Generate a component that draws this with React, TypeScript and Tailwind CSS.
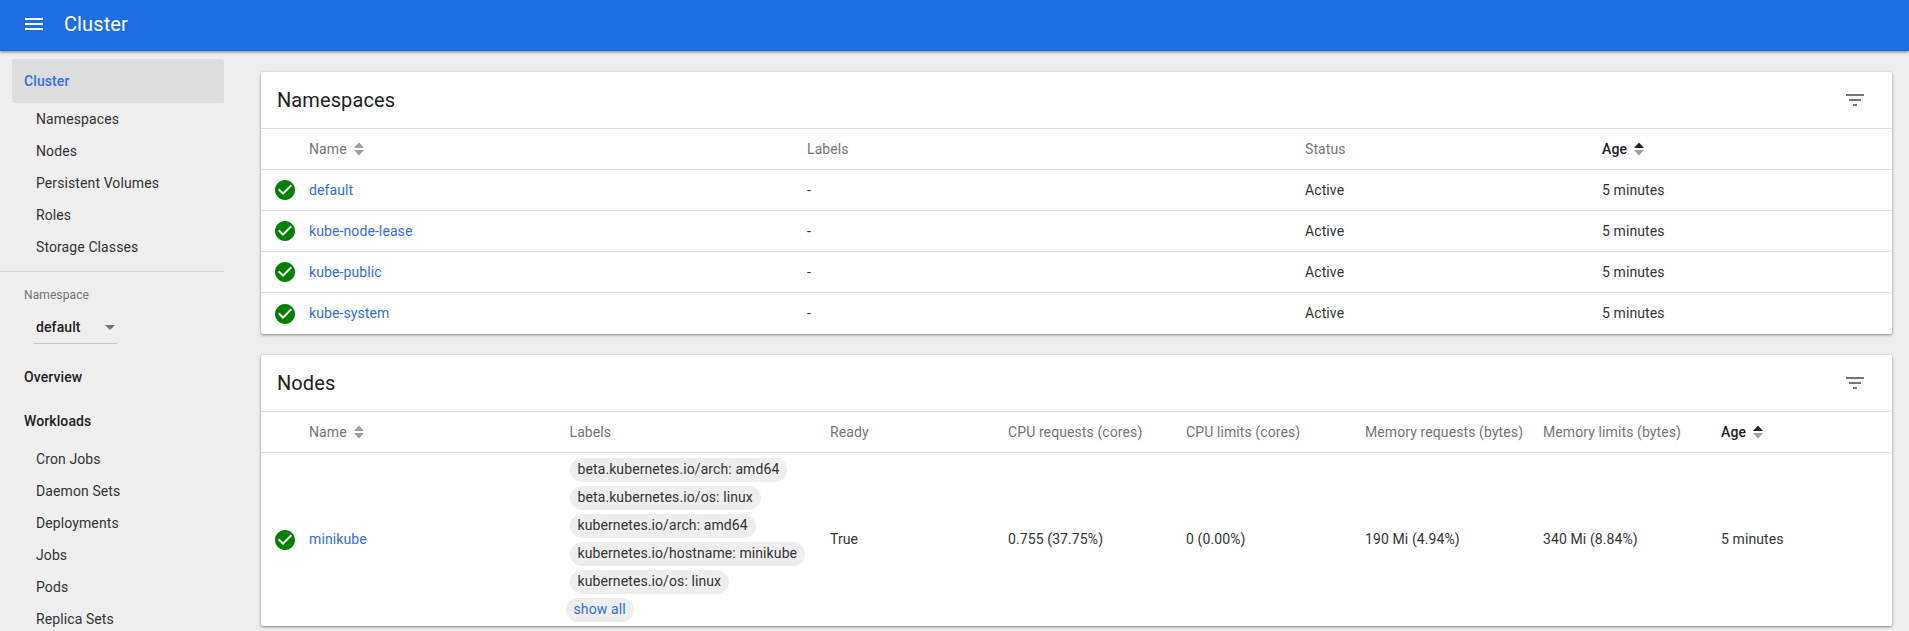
const CLUSTER_ITEMS = ['Namespaces', 'Nodes', 'Persistent Volumes', 'Roles', 'Storage Classes']
const WORKLOAD_ITEMS = ['Cron Jobs', 'Daemon Sets', 'Deployments', 'Jobs', 'Pods', 'Replica Sets']
const NAMESPACES = ['default', 'kube-node-lease', 'kube-public', 'kube-system']
const NODE_LABELS = [
  'beta.kubernetes.io/arch: amd64',
  'beta.kubernetes.io/os: linux',
  'kubernetes.io/arch: amd64',
  'kubernetes.io/hostname: minikube',
  'kubernetes.io/os: linux',
]

const NS_COLS = 'grid grid-cols-[48px_498px_498px_297px_1fr]'
const NODE_COLS = 'grid grid-cols-[48px_260.5px_260.5px_178px_178px_179px_178px_178px_1fr]'

function StatusIcon() {
  return (
    <svg width="24" height="24" viewBox="0 0 24 24" className="block">
      <path
        fill="#008000"
        d="M12 2C6.48 2 2 6.48 2 12s4.48 10 10 10 10-4.48 10-10S17.52 2 12 2zm-2 15l-5-5 1.41-1.41L10 14.17l7.59-7.59L19 8l-9 9z"
      />
    </svg>
  )
}

function FilterIcon() {
  return (
    <svg width="24" height="24" viewBox="0 0 24 24" className="block">
      <path fill="#757575" d="M10 18h4v-2h-4v2zM3 6v2h18V6H3zm3 7h12v-2H6v2z" />
    </svg>
  )
}

function MenuIcon() {
  return (
    <svg width="24" height="24" viewBox="0 0 24 24" className="block">
      <path fill="#ffffff" d="M3 18h18v-2H3v2zm0-5h18v-2H3v2zm0-7v2h18V6H3z" />
    </svg>
  )
}

function SortArrows({ active }: { active?: boolean }) {
  return (
    <svg width="12" height="16" viewBox="0 0 12 16" className="block ml-[6px]">
      <path fill={active ? '#212121' : '#9e9e9e'} d="M6 1.5l5 5.5H1z" />
      <path fill="#9e9e9e" d="M1 9h10l-5 5.5z" />
    </svg>
  )
}

function HeaderCell({ label, sort, active }: { label: string; sort?: boolean; active?: boolean }) {
  return (
    <div className={`flex items-center ${active ? 'text-[#212121] font-medium' : 'text-[#757575]'}`}>
      <span>{label}</span>
      {sort && <SortArrows active={active} />}
    </div>
  )
}

function Card({ title, children, className }: { title: string; children: React.ReactNode; className: string }) {
  return (
    <section className={`bg-white rounded-[2px] shadow-[0_1px_3px_rgba(0,0,0,0.45)] ${className}`}>
      <div className="h-[56px] pl-4 pr-[25px] flex items-center justify-between border-b border-[#e0e0e0] box-content">
        <h2 className="text-[20px] text-[#212121]">{title}</h2>
        <FilterIcon />
      </div>
      {children}
    </section>
  )
}

function SideLink({ label }: { label: string }) {
  return <div className="h-8 pl-9 flex items-center text-[#333333]">{label}</div>
}

export default function App() {
  return (
    <div className="h-screen overflow-hidden bg-[#eeeeee] flex flex-col text-[14px] tracking-[0.1px] font-['Roboto',sans-serif]">
      <header className="h-[51px] shrink-0 bg-[#1f6de3] shadow-[0_1px_3px_rgba(0,0,0,0.5)] z-10 flex items-center pl-[22px] pb-[3px] text-white">
        <MenuIcon />
        <span className="ml-[18px] text-[20px] font-normal">Cluster</span>
      </header>

      <div className="flex flex-1 min-h-0">
        <aside className="w-[224px] shrink-0 pt-2 overflow-hidden">
          <div className="ml-3 h-11 pl-3 rounded-[2px] bg-[#dddddd] flex items-center text-[#326de6] font-medium">
            Cluster
          </div>
          {CLUSTER_ITEMS.map((item) => (
            <SideLink key={item} label={item} />
          ))}
          <div className="mt-2 border-t border-[#d8d8d8]" />
          <div className="pl-6 mt-[15px] text-[12px] leading-4 text-[#757575]">Namespace</div>
          <div className="ml-[34px] w-[83px] h-[33px] mt-[8px] border-b border-[#c8c8c8] flex items-center justify-between pl-[2px] font-medium text-[#212121]">
            <span>default</span>
            <span className="w-0 h-0 border-x-[5px] border-x-transparent border-t-[5px] border-t-[#757575] mr-[2px]" />
          </div>
          <div className="pl-6 h-8 mt-[17px] flex items-center font-medium text-[#212121]">Overview</div>
          <div className="pl-6 h-8 mt-3 flex items-center font-medium text-[#212121]">Workloads</div>
          <div className="mt-[6px]">
            {WORKLOAD_ITEMS.map((item) => (
              <SideLink key={item} label={item} />
            ))}
          </div>
        </aside>

        <main className="flex-1 min-w-0 pl-[37px] pr-[17px] pt-[21px]">
          <Card title="Namespaces" className="mb-[21px]">
            <div className={`${NS_COLS} h-[41px] border-b border-[#e0e0e0]`}>
              <div />
              <HeaderCell label="Name" sort />
              <HeaderCell label="Labels" />
              <HeaderCell label="Status" />
              <HeaderCell label="Age" sort active />
            </div>
            {NAMESPACES.map((ns, i) => (
              <div
                key={ns}
                className={`${NS_COLS} h-[41px] items-center text-[#333333] ${i < NAMESPACES.length - 1 ? 'border-b border-[#e0e0e0]' : ''}`}
              >
                <div className="pl-3">
                  <StatusIcon />
                </div>
                <a className="text-[#326de6]">{ns}</a>
                <div>-</div>
                <div>Active</div>
                <div>5 minutes</div>
              </div>
            ))}
          </Card>

          <Card title="Nodes" className="">
            <div className={`${NODE_COLS} h-[41px] border-b border-[#e0e0e0]`}>
              <div />
              <HeaderCell label="Name" sort />
              <HeaderCell label="Labels" />
              <HeaderCell label="Ready" />
              <HeaderCell label="CPU requests (cores)" />
              <HeaderCell label="CPU limits (cores)" />
              <HeaderCell label="Memory requests (bytes)" />
              <HeaderCell label="Memory limits (bytes)" />
              <HeaderCell label="Age" sort active />
            </div>
            <div className={`${NODE_COLS} h-[173px] items-center text-[#333333]`}>
              <div className="pl-3">
                <StatusIcon />
              </div>
              <a className="text-[#326de6]">minikube</a>
              <div className="flex flex-col items-start gap-1">
                {NODE_LABELS.map((label) => (
                  <span key={label} className="h-6 px-2 rounded-xl bg-[#eeeeee] flex items-center">
                    {label}
                  </span>
                ))}
                <span className="h-6 px-2 -ml-1 rounded-xl bg-[#eeeeee] flex items-center text-[#326de6]">show all</span>
              </div>
              <div>True</div>
              <div>0.755 (37.75%)</div>
              <div>0 (0.00%)</div>
              <div>190 Mi (4.94%)</div>
              <div>340 Mi (8.84%)</div>
              <div>5 minutes</div>
            </div>
          </Card>
        </main>
      </div>
    </div>
  )
}
